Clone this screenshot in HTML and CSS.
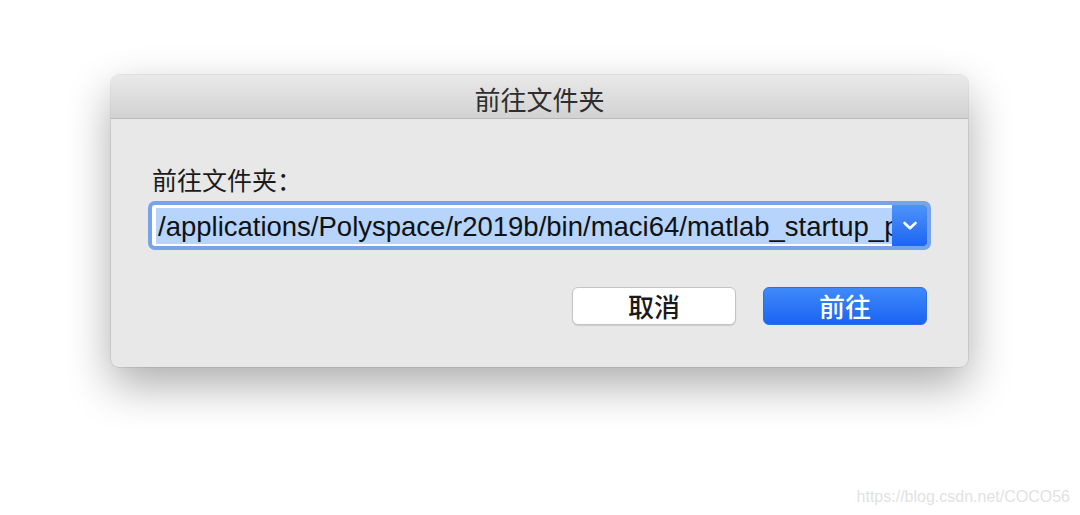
FILE: index.html
```html
<!DOCTYPE html>
<html lang="zh-CN">
<head>
  <meta charset="UTF-8" />
  <title>前往文件夹</title>
  <link rel="stylesheet" href="styles.css">
</head>
<body>
  <div class="dialog">
    <div class="titlebar">前往文件夹</div>
    <div class="content">
      <div class="label">前往文件夹：</div>
      <div class="combo">
        <div class="field">
          <span class="selected">/applications/Polyspace/r2019b/bin/maci64/matlab_startup_p</span>
        </div>
        <div class="arrow">
          <svg width="16" height="11" viewBox="0 0 16 11">
            <path d="M2.5 3 L8 8.2 L13.5 3" fill="none" stroke="#ffffff" stroke-width="2.6" stroke-linecap="round" stroke-linejoin="round" />
          </svg>
        </div>
      </div>
      <div class="buttons">
        <button class="btn cancel">取消</button>
        <button class="btn go">前往</button>
      </div>
    </div>
  </div>
  <div class="watermark">https://blog.csdn.net/COCO56</div>
</body>
</html>
```

FILE: styles.css
```css
body {
  margin: 0;
  background-color: #ffffff;
  font-family: "Liberation Sans", "Noto Sans CJK SC", sans-serif;
  width: 1080px;
  height: 515px;
  overflow: hidden;
}

.dialog {
  margin: 75px 0 0 111px;
  width: 857px;
  height: 292px;
  border-radius: 8px;
  background-color: #e8e8e8;
  box-shadow:
    0 0 0 1px rgba(0, 0, 0, 0.07),
    0 18px 45px rgba(0, 0, 0, 0.33);
  overflow: hidden;
}

.titlebar {
  height: 43px;
  line-height: 47px;
  text-align: center;
  font-family: "Noto Sans CJK SC", sans-serif;
  font-size: 26px;
  color: #2e2e2e;
  background: linear-gradient(#e9e9e9, #d2d2d2);
  border-bottom: 1px solid #b9b9b9;
}

.content {
  padding: 45px 41px 0 37px;
}

.label {
  margin-left: 4px;
  font-family: "Noto Sans CJK SC", sans-serif;
  font-size: 25px;
  line-height: 30px;
  color: #1a1a1a;
}

.combo {
  margin-top: 7px;
  width: 783px;
  height: 49px;
  box-sizing: border-box;
  border: 4px solid #76a3ec;
  border-radius: 7px;
  background-color: #ffffff;
  display: flex;
}

.field {
  flex: 1;
  min-width: 0;
  padding: 3px 0 2px 4px;
  overflow: hidden;
}

.selected {
  display: block;
  height: 36px;
  line-height: 38px;
  padding-left: 2px;
  background-color: #b6d4fc;
  white-space: nowrap;
  overflow: hidden;
  font-size: 27.5px;
  color: #111111;
}

.arrow {
  width: 35px;
  background: linear-gradient(#4f93fa, #1c66f2);
  border-radius: 0 3px 3px 0;
  display: flex;
  justify-content: center;
  align-items: center;
}

.buttons {
  margin-top: 37px;
  display: flex;
  justify-content: flex-end;
  gap: 27px;
}

.btn {
  width: 164px;
  height: 38px;
  border-radius: 6px;
  font-family: "Noto Sans CJK SC", sans-serif;
  font-size: 26px;
  font-weight: 500;
  line-height: 36px;
  padding: 0;
}

.cancel {
  background-color: #ffffff;
  border: 1px solid #c4c4c4;
  box-shadow: 0 1px 1px rgba(0, 0, 0, 0.12);
  color: #1a1a1a;
}

.go {
  background: linear-gradient(#3f8af9, #1a64f3);
  border: 1px solid #2b6fe6;
  color: #ffffff;
}

.watermark {
  margin-top: 121px;
  padding-right: 10px;
  text-align: right;
  font-size: 16px;
  color: #e2e2e2;
}
```
